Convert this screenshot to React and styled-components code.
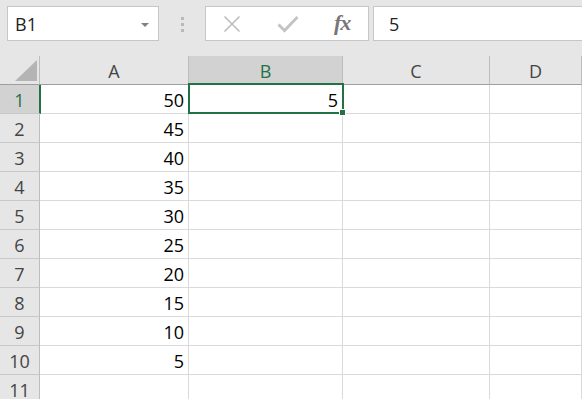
import React from 'react';
import styled, { createGlobalStyle } from 'styled-components';

const GlobalStyle = createGlobalStyle`
  html, body {
    margin: 0;
    padding: 0;
    background: #ffffff;
    overflow: hidden;
  }
  * { box-sizing: border-box; }
`;

const COLS = ['A', 'B', 'C', 'D'];
const WIDTHS = '40px 149px 154px 147px 1fr';
const ROWS = [50, 45, 40, 35, 30, 25, 20, 15, 10, 5, null];
const GREEN = '#217346';

const Sheet = styled.div`
  width: 582px;
  height: 399px;
  overflow: hidden;
  font-family: "Open Sans", "Noto Sans", sans-serif;
  background: #ffffff;
`;

const Toolbar = styled.div`
  height: 56px;
  background: #e6e6e6;
  padding: 6px 0 0 7px;
  display: flex;
  align-items: flex-start;
`;

const Box = styled.div`
  height: 35px;
  background: #ffffff;
  border: 1px solid #c6c6c6;
  display: flex;
  align-items: center;
`;

const NameBox = styled(Box)`
  width: 152px;
  padding: 0 9px 0 7px;
  justify-content: space-between;
  font-size: 18px;
  color: #222;
`;

const Caret = styled.span`
  width: 0;
  height: 0;
  border-left: 4px solid transparent;
  border-right: 4px solid transparent;
  border-top: 4px solid #808080;
  margin-top: 2px;
`;

const Grip = styled.div`
  width: 46px;
  height: 35px;
  display: flex;
  flex-direction: column;
  align-items: center;
  justify-content: center;
  gap: 3px;
  padding-top: 1px;
`;

const GripDot = styled.span`
  width: 3px;
  height: 3px;
  background: #b9b9b9;
`;

const FuncBox = styled(Box)`
  width: 164px;
  padding-left: 17px;
`;

const IconSlot = styled.div`
  width: ${p => p.$w}px;
  height: 33px;
  display: flex;
  align-items: center;
`;

const Fx = styled.span`
  font-family: "Liberation Serif", "DejaVu Serif", serif;
  font-style: italic;
  font-weight: bold;
  font-size: 22px;
  color: #767676;
  letter-spacing: -1px;
  margin-left: 5px;
  margin-top: -1px;
`;

const FormulaInput = styled(Box)`
  flex: 1;
  margin-left: 4px;
  margin-right: -2px;
  padding-left: 15px;
  font-size: 18px;
  color: #222;
`;

const Grid = styled.div`
  position: relative;
  display: grid;
  grid-template-columns: ${WIDTHS};
  grid-auto-rows: 29px;
`;

const HeadCell = styled.div`
  background: ${p => (p.$active ? '#d2d2d2' : '#e6e6e6')};
  color: ${p => (p.$active ? GREEN : '#444')};
  border-right: 1px solid #bdbdbd;
  border-bottom: 1px solid #9e9e9e;
  font-size: 18px;
  line-height: 26px;
  padding-top: 2px;
  text-align: center;
`;

const Corner = styled.div`
  background: #e6e6e6;
  border-right: 1px solid #bdbdbd;
  border-bottom: 1px solid #9e9e9e;
  display: flex;
  align-items: flex-end;
  justify-content: flex-end;
  padding: 0 2px 3px 0;
`;

const RowHead = styled.div`
  background: ${p => (p.$active ? '#d2d2d2' : '#e6e6e6')};
  color: ${p => (p.$active ? GREEN : '#444')};
  border-right: ${p => (p.$active ? `2px solid ${GREEN}` : '1px solid #bdbdbd')};
  margin-right: ${p => (p.$active ? '-1px' : '0')};
  border-bottom: 1px solid #c8c8c8;
  font-size: 18px;
  line-height: 26px;
  padding-top: 2px;
  text-align: center;
  position: relative;
  z-index: 1;
`;

const Cell = styled.div`
  border-right: 1px solid #dadada;
  border-bottom: 1px solid #dadada;
  font-size: 18px;
  line-height: 26px;
  padding: 2px 4px 0 0;
  text-align: right;
  color: #000;
`;

const Selection = styled.div`
  position: absolute;
  left: 188px;
  top: 27px;
  width: 156px;
  height: 31px;
  border: 2px solid ${GREEN};
  pointer-events: none;
`;

const FillHandle = styled.span`
  position: absolute;
  right: -4px;
  bottom: -4px;
  width: 7px;
  height: 7px;
  background: ${GREEN};
  border: 1px solid #ffffff;
`;

function App() {
  return (
    <Sheet>
      <GlobalStyle />
      <Toolbar>
        <NameBox>
          <span>B1</span>
          <Caret />
        </NameBox>
        <Grip>
          <GripDot />
          <GripDot />
          <GripDot />
        </Grip>
        <FuncBox>
          <IconSlot $w={54}>
            <svg width="18" height="18" viewBox="0 0 18 18">
              <path d="M1.5 1.5 L16.5 16.5 M16.5 1.5 L1.5 16.5" stroke="#bdbdbd" strokeWidth="1.6" fill="none" />
            </svg>
          </IconSlot>
          <IconSlot $w={52}>
            <svg width="22" height="18" viewBox="0 0 22 18">
              <path d="M1.5 9.5 L7.5 15.5 L20.5 2" stroke="#c4c4c4" strokeWidth="3" fill="none" />
            </svg>
          </IconSlot>
          <IconSlot $w={30}>
            <Fx>fx</Fx>
          </IconSlot>
        </FuncBox>
        <FormulaInput>5</FormulaInput>
      </Toolbar>
      <Grid>
        <Corner>
          <svg width="22" height="21" viewBox="0 0 22 21">
            <polygon points="22,0 22,21 0,21" fill="#b4b4b4" />
          </svg>
        </Corner>
        {COLS.map(c => (
          <HeadCell key={c} $active={c === 'B'}>{c}</HeadCell>
        ))}
        {ROWS.map((v, i) => (
          <React.Fragment key={i}>
            <RowHead $active={i === 0}>{i + 1}</RowHead>
            <Cell>{v}</Cell>
            <Cell>{i === 0 ? 5 : ''}</Cell>
            <Cell />
            <Cell />
          </React.Fragment>
        ))}
        <Selection>
          <FillHandle />
        </Selection>
      </Grid>
    </Sheet>
  );
}

export default App;
